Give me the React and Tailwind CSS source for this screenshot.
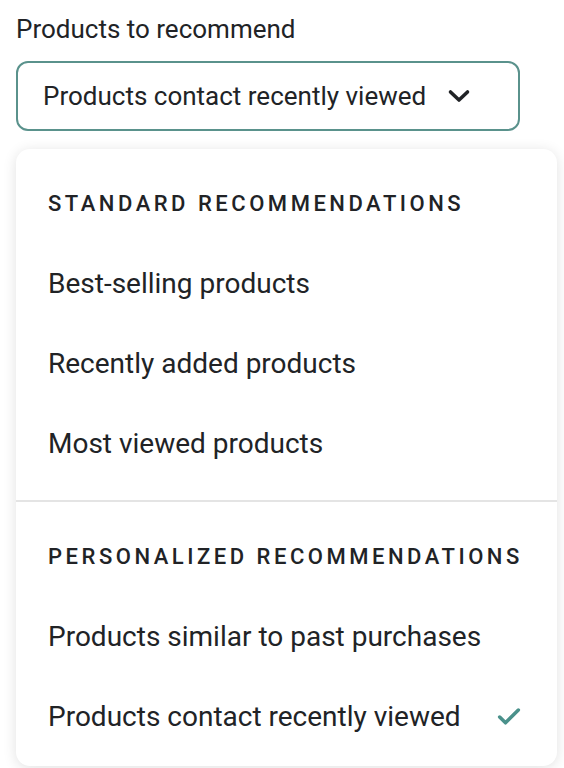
import { Check } from "lucide-react";

const groups = [
  {
    title: "Standard recommendations",
    items: ["Best-selling products", "Recently added products", "Most viewed products"],
  },
  {
    title: "Personalized recommendations",
    items: ["Products similar to past purchases", "Products contact recently viewed"],
  },
];

const selected = "Products contact recently viewed";

export default function App() {
  return (
    <div className="min-h-screen bg-white px-4 pt-[13px] font-['Roboto',sans-serif] text-[#212326]">
      <label className="block text-[26px] leading-[32px]">Products to recommend</label>

      <button className="mt-[16px] flex h-[70px] w-[504px] items-center justify-between rounded-[12px] border-2 border-[#5a928c] bg-white pl-[25px] pr-[47px] text-left">
        <span className="text-[26px]">{selected}</span>
        <svg width="24" height="14" viewBox="0 0 24 14" className="text-[#212326]">
          <path d="M3.5 3l8.5 8 8.5-8" fill="none" stroke="currentColor" strokeWidth="3.6" strokeLinecap="round" strokeLinejoin="round" />
        </svg>
      </button>

      <div className="mt-[18px] w-[541px] overflow-hidden rounded-[14px] bg-white shadow-[0_2px_14px_rgba(0,0,0,0.12)]">
        {groups.map((group, gi) => (
          <div key={group.title} className={gi > 0 ? "border-t-2 border-[#e4e4e4] pb-[9px]" : "pb-4"}>
            <div className="px-8 pt-[41px] pb-[26px] text-[22px] font-medium uppercase leading-[28px] tracking-[0.16em]">
              {group.title}
            </div>
            {group.items.map((item) => (
              <div key={item} className="flex h-[80px] items-center justify-between px-8 text-[28px]">
                <span>{item}</span>
                {item === selected && <Check className="mr-[2px] h-[28px] w-[28px] text-[#4a918b]" strokeWidth={3} />}
              </div>
            ))}
          </div>
        ))}
      </div>
    </div>
  );
}
